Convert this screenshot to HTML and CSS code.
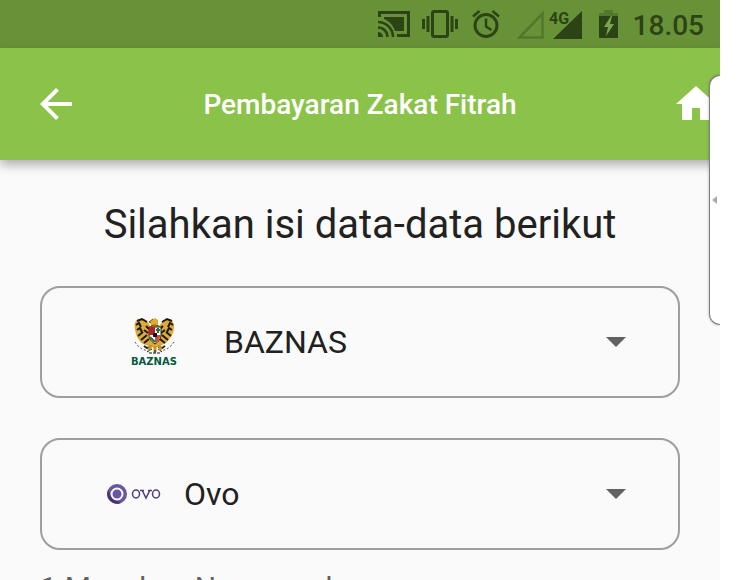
FILE: index.html
```html
<!DOCTYPE html>
<html lang="id">
<head>
<meta charset="utf-8">
<meta name="viewport" content="width=device-width, initial-scale=1">
<title>Pembayaran Zakat Fitrah</title>
<link rel="stylesheet" href="styles.css">
</head>
<body>
<div class="screen">
  <div class="status">
    <svg width="32" height="26" viewBox="0 0 32 26" aria-hidden="true">
      <path d="M1.500 6V1.500H30.500V24.500H19" fill="none" stroke="currentColor" stroke-width="3"/>
      <path d="M6 6H26V20H17C15 14 11 10 6 8z" fill="currentColor"/>
      <path d="M0 21a5 5 0 0 1 5 5H0z" fill="currentColor"/>
      <path d="M0 16.500A9.500 9.500 0 0 1 9.500 26M0 11A15 15 0 0 1 15 26" fill="none" stroke="currentColor" stroke-width="2.600"/>
    </svg>
    <svg width="36" height="28" viewBox="0 0 36 28" aria-hidden="true">
      <rect x="10.500" y="1.500" width="15" height="25" rx="1.500" fill="none" stroke="currentColor" stroke-width="3"/>
      <path d="M1.500 9v10M6 6v16M30 6v16M34.500 9v10" stroke="currentColor" stroke-width="3"/>
    </svg>
    <svg class="alarm" width="28" height="28" viewBox="0 0 28 28" aria-hidden="true">
      <circle cx="14" cy="15.500" r="11" fill="none" stroke="currentColor" stroke-width="3"/>
      <path d="M14 8.500v8l5.500 3.500M1 6.500L7.500 1M27 6.500L20.500 1" fill="none" stroke="currentColor" stroke-width="2.500"/>
    </svg>
    <svg class="signals" width="67" height="30" viewBox="0 0 67 30" aria-hidden="true">
      <path d="M3.500 28.500H26.500V4.500z" fill="none" stroke="#52782b" stroke-width="2.600"/>
      <path d="M37 30H66V2z" fill="currentColor"/>
      <path d="M33 0H52V16H33z" fill="#689238"/>
      <text x="33" y="15">4G</text>
    </svg>
    <svg class="battery" width="20" height="30" viewBox="0 0 20 30" aria-hidden="true">
      <path d="M0 4H5V1H14V4H19V8H0z" fill="#52782b"/>
      <path d="M0 7H19V29H0z" fill="currentColor"/>
      <path d="M12 7L5 18H9L7 27L15 15H11L13 7z" fill="#7ca44e"/>
    </svg>
    <time>18.05</time>
  </div>
  <header class="appbar">
    <button class="back" type="button" aria-label="Kembali">
      <svg width="48" height="48" viewBox="0 0 24 24"><path fill="currentColor" d="M20 11H7.830l5.590-5.590L12 4l-8 8 8 8 1.410-1.410L7.830 13H20z"/></svg>
    </button>
    <h1>Pembayaran Zakat Fitrah</h1>
    <button class="home" type="button" aria-label="Beranda">
      <svg width="48" height="48" viewBox="0 0 24 24"><path fill="currentColor" d="M10 20v-6h4v6h5v-8h3L12 3 2 12h3v8z"/></svg>
    </button>
  </header>
  <main>
    <h2>Silahkan isi data-data berikut</h2>
    <div class="field">
      <label class="logo logo-baznas" for="lembaga" aria-label="Lembaga">
        <svg width="48" height="50" viewBox="0 0 48 50" aria-hidden="true">
          <path d="M19 9C17 3 11 0 6 3C2 6 4 12 5 17C6 21 9 25 12 27L18 29L24 31L31 28L35 26C40 21 43 16 43 10C44 3 37 0 32 4L28 9z" fill="#dcab38"/>
          <path d="M6 4L11 2L16 5M5 8L8 6L10 10M6 13L9 11L11 15M7 19L12 15M10 23L16 18M13 26L18 22M15 9L18 12M13 13L17 16M41 4L36 2L31 5M42 8L39 6L37 10M41 13L38 11L36 15M40 19L35 15M37 23L31 18M34 26L29 22M32 9L29 12M34 13L30 16" fill="none" stroke="#1d1812" stroke-width="2"/>
          <path d="M21 3L24 1L27 3V9H20V6L18 5z" fill="#dfac2e"/>
          <path d="M20 6L18 5L22 2M20 9L23 8L28 9" fill="none" stroke="#66501b"/>
          <path d="M18 10H30V19C29 23 26 26 24 27C21 25 18 22 18 18z" fill="#fff" stroke="#27221c"/>
          <path d="M18 10H24V18H18z" fill="#b72028"/>
          <path d="M24 18H30L27 24L24 26z" fill="#d34a36"/>
          <path d="M27 11V16M25 13H29" stroke="#247245" stroke-width="2"/>
          <path d="M19 20L24 25" stroke="#237345" stroke-width="2"/>
          <rect x="22" y="16" width="4" height="4" fill="#171512"/>
          <path d="M4 25L6 28L11 32L17 34M43 25L41 28L36 32L30 34" fill="none" stroke="#51514a" stroke-dasharray="2 2"/>
          <path d="M13 29L16 31L20 30M34 29L31 31L27 30" fill="none" stroke="#242420" stroke-width="2"/>
          <path d="M20 28L18 33M24 29V35M28 28L30 33" stroke="#c69324" stroke-width="3"/>
          <path d="M16 35L21 32M24 36V33M31 35L27 32M18 36H29" stroke="#171512" stroke-dasharray="3 1"/>
          <text x="0" y="48">BAZNAS</text>
        </svg>
      </label>
      <select id="lembaga"><option>BAZNAS</option></select>
      <svg class="caret" width="20" height="10" viewBox="0 0 20 10" aria-hidden="true"><path d="M0 0H20L10 10z"/></svg>
    </div>
    <div class="field">
      <label class="logo logo-ovo" for="bayar" aria-label="Metode pembayaran">
        <svg width="54" height="22" viewBox="0 0 54 22" aria-hidden="true">
          <circle cx="10" cy="11" r="10" fill="#6856a0"/>
          <path d="M1 7A10 10 0 0 0 14 20L5 15z" fill="#45346f"/>
          <circle cx="10" cy="11" r="5.500" fill="#6856a0" stroke="#fafafa" stroke-width="2"/>
          <g fill="none" stroke="#4c3c82" stroke-width="1.500">
            <ellipse cx="29" cy="11" rx="3.500" ry="4"/><path d="M33 7.500H37M35 7L39 15L43 7M41 7.500H45"/><ellipse cx="49" cy="11" rx="3.500" ry="4"/>
          </g>
        </svg>
      </label>
      <select id="bayar"><option>Ovo</option></select>
      <svg class="caret" width="20" height="10" viewBox="0 0 20 10" aria-hidden="true"><path d="M0 0H20L10 10z"/></svg>
    </div>
    <p class="step">1.Masukan Nama anda</p>
  </main>
  <aside class="edge" aria-label="Panel tepi">
    <svg width="5" height="8" viewBox="0 0 5 8" aria-hidden="true"><path d="M5 0V8L0 4z" fill="#aaa"/></svg>
  </aside>
</div>
</body>
</html>
```
FILE: styles.css
```css
* { box-sizing: border-box; }

body {
  margin: 0;
  padding-right: 36px;
  background: #fff;
  color: #212121;
  font-family: Roboto, sans-serif;
}

.screen {
  position: relative;
  height: 100vh;
  overflow: hidden;
  background: #fafafa;
}

svg { display: block; flex: none; }

.status {
  display: flex;
  align-items: center;
  justify-content: flex-end;
  gap: 12px;
  height: 48px;
  padding-right: 16px;
  background: #689238;
  color: #2c4415;
}

.status .alarm { margin-left: 2px; }
.status .signals { margin-left: 4px; }
.status .battery { margin-left: 4px; }

.status text {
  fill: currentColor;
  font-size: 16px;
  font-weight: 700;
}

.status time {
  margin-left: 2px;
  padding-top: 2px;
  font-size: 28px;
  font-weight: 500;
}

.appbar {
  display: grid;
  grid-template-columns: 1fr auto 1fr;
  align-items: center;
  height: 112px;
  background: #8bc34a;
  color: #fff;
  box-shadow: 0 5px 10px rgba(0, 0, 0, 0.3);
}

.appbar button {
  padding: 0;
  border: 0;
  background: none;
  color: inherit;
}

.back { justify-self: start; margin-left: 32px; }
.home { justify-self: end; }

h1 {
  margin: 0;
  font-size: 28px;
  font-weight: 500;
}

main { padding: 40px; }

h2 {
  margin: 0 0 36px;
  font-size: 40px;
  font-weight: 400;
  line-height: 50px;
  text-align: center;
}

.field {
  display: flex;
  align-items: center;
  height: 112px;
  padding-right: 52px;
  border: 2px solid #9e9e9e;
  border-radius: 20px;
}

.field + .field { margin-top: 40px; }

.logo-baznas { margin: 0 45px 0 89px; }
.logo-ovo { margin: 0 23px 0 65px; }

.logo text {
  fill: #07583f;
  font-family: "DejaVu Sans", sans-serif;
  font-size: 10px;
  font-weight: 700;
}

select {
  flex: 1;
  min-width: 0;
  padding: 0;
  border: 0;
  appearance: none;
  background: none;
  color: inherit;
  font: 32px/48px Roboto, sans-serif;
}

.caret { fill: #616161; }

.step {
  margin: 20px 0 0;
  color: #616161;
  font-size: 30px;
  line-height: 36px;
  white-space: nowrap;
}

.edge {
  position: absolute;
  top: 75px;
  right: 0;
  display: flex;
  align-items: center;
  width: 11px;
  height: 250px;
  padding-left: 2px;
  border: 1px solid #808080;
  border-right: 0;
  border-radius: 12px 0 0 12px;
  background: #fff;
  box-shadow: 0 0 3px rgba(0, 0, 0, 0.3);
}
```
